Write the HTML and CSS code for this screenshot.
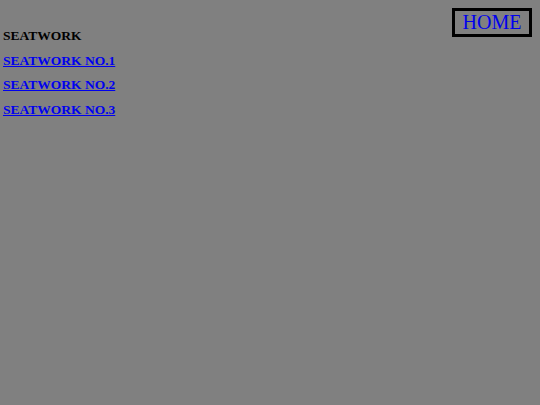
FILE: index.html
```html
<!DOCTYPE html>
<html>
<head>
<meta charset="utf-8">
<link rel="stylesheet" href="styles.css">
</head>
<body>
<a class="home" href="#">HOME</a>
<div class="menu">
  <div class="title">SEATWORK</div>
  <a class="item" href="#">SEATWORK NO.1</a>
  <a class="item" href="#">SEATWORK NO.2</a>
  <a class="item" href="#">SEATWORK NO.3</a>
</div>
</body>
</html>
```
FILE: styles.css
```css
html, body {
  margin: 0;
  background: #808080;
}
body {
  padding: 8px 8px 0 3px;
  font-family: "Liberation Serif", "Times New Roman", serif;
}
.home {
  float: right;
  border: 3px solid #000;
  padding: 0 7.5px;
  font-size: 20px;
  line-height: 23px;
  color: #0000ee;
  text-decoration: none;
}
.menu {
  display: flex;
  flex-direction: column;
  align-items: flex-start;
  padding-top: 16px;
  font-size: 13.5px;
  font-weight: bold;
  line-height: 24.6px;
}
.title {
  color: #000;
}
.item {
  color: #0000ee;
}
```
